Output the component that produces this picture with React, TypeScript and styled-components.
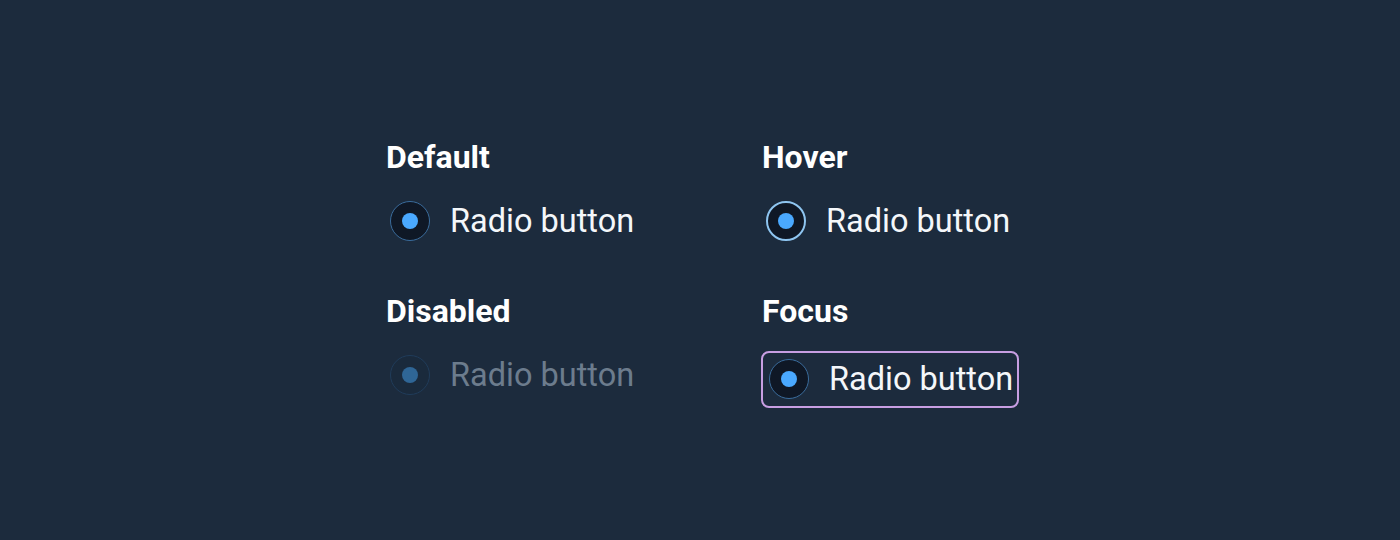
import styled, { createGlobalStyle, css } from "styled-components";

type State = "default" | "hover" | "disabled" | "focus";

const GlobalStyle = createGlobalStyle`
    html, body {
        margin: 0;
        padding: 0;
        background: #1c2b3d;
    }
    body {
        font-family: Roboto, "Liberation Sans", sans-serif;
        color: #f4f7fa;
    }
`;

const items: { title: string; state: State }[] = [
    { title: "Default", state: "default" },
    { title: "Hover", state: "hover" },
    { title: "Disabled", state: "disabled" },
    { title: "Focus", state: "focus" },
];

const App = () => {
    return (
        <>
            <GlobalStyle />
            <Page>
                <Grid>
                    {items.map((item) => (
                        <Cell key={item.title}>
                            <Title>{item.title}</Title>
                            <RadioLabel $state={item.state}>
                                <Circle $state={item.state}>
                                    <Dot $state={item.state} />
                                </Circle>
                                <LabelText $state={item.state}>Radio button</LabelText>
                            </RadioLabel>
                        </Cell>
                    ))}
                </Grid>
            </Page>
        </>
    );
};

export const Page = styled.div`
    height: 540px;
    display: flex;
    align-items: flex-start;
    justify-content: flex-start;
    padding: 141px 0 0 386px;
    box-sizing: border-box;
`;

export const Grid = styled.div`
    display: grid;
    grid-template-columns: 376px auto;
    row-gap: 54px;
`;

export const Cell = styled.div`
    display: flex;
    flex-direction: column;
    align-items: flex-start;
    gap: 28px;
`;

export const Title = styled.h2`
    margin: 0;
    font-size: 32px;
    line-height: 32px;
    font-weight: 700;
    color: #ffffff;
`;

export const RadioLabel = styled.label<{ $state: State }>`
    display: flex;
    align-items: center;
    gap: 20px;
    height: 40px;
    cursor: pointer;

    ${({ $state }) =>
        $state === "focus" &&
        css`
            height: auto;
            margin: -4px 0 0 -1px;
            padding: 6px 4px 7px 2px;
            border: 2px solid #c79ee2;
            border-radius: 8px;
        `}
`;

export const Circle = styled.span<{ $state: State }>`
    width: 40px;
    height: 40px;
    margin-left: 4px;
    box-sizing: border-box;
    border-radius: 50%;
    display: flex;
    align-items: center;
    justify-content: center;
    background: #0f1826;
    border: 1.5px solid #3a6c9c;

    ${({ $state }) =>
        $state === "hover" &&
        css`
            border: 2px solid #8ec5f0;
        `}
    ${({ $state }) =>
        $state === "disabled" &&
        css`
            background: #1a2a3c;
            border-color: #203c5a;
        `}
`;

export const Dot = styled.span<{ $state: State }>`
    width: 16px;
    height: 16px;
    border-radius: 50%;
    background: ${({ $state }) => ($state === "disabled" ? "#2f6696" : "#4aa9ff")};
`;

export const LabelText = styled.span<{ $state: State }>`
    font-size: 32.5px;
    line-height: 36px;
    font-weight: 400;
    color: ${({ $state }) => ($state === "disabled" ? "#6c7c8d" : "#f4f7fa")};
`;

export default App;
